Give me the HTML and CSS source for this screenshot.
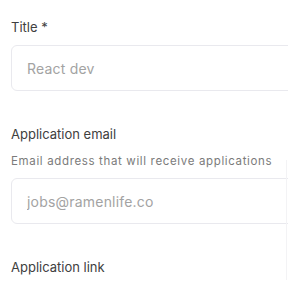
FILE: index.html
```html
<!DOCTYPE html>
<html lang="en">
<head>
  <meta charset="UTF-8" />
  <meta name="viewport" content="width=device-width, initial-scale=1.0" />
  <title>Job details</title>
  <link rel="stylesheet" href="styles.css">
</head>
<body>
  <form class="job-form">
    <div class="field">
      <label class="field-label" for="title">Title *</label>
      <input class="field-input" id="title" type="text" placeholder="React dev" />
    </div>

    <div class="field">
      <label class="field-label" for="email">Application email</label>
      <div class="field-hint">Email address that will receive applications</div>
      <input class="field-input" id="email" type="email" placeholder="jobs@ramenlife.co" />
    </div>

    <div class="field">
      <label class="field-label" for="link">Application link</label>
    </div>
  </form>
  <div class="edge-line"></div>
</body>
</html>
```

FILE: styles.css
```css
* { box-sizing: border-box; }
html, body {
  margin: 0;
  padding: 0;
  background: #fff;
  overflow: hidden;
}
body {
  font-family: Inter, 'Noto Sans', sans-serif;
  color: #3a3a3a;
  width: 288px;
  height: 288px;
  position: relative;
}
.job-form {
  padding: 19px 0 0 11px;
  display: flex;
  flex-direction: column;
  gap: 35px;
}
.field {
  display: flex;
  flex-direction: column;
}
.field-label {
  font-size: 13px;
  line-height: 16px;
  color: #404040;
}
.field-hint {
  margin-top: 12px;
  font-size: 11.5px;
  line-height: 14px;
  letter-spacing: 0.65px;
  color: #7b7b7b;
}
.field-input {
  margin-top: 10px;
  width: 320px;
  height: 46px;
  border: 1px solid #e9e9ee;
  border-radius: 6px;
  padding: 0 15px;
  font-family: inherit;
  font-size: 14px;
  letter-spacing: 0.2px;
  color: #333;
  outline: none;
}
.field-input::placeholder {
  color: #a3a3a3;
}
.edge-line {
  position: absolute;
  right: 1px;
  top: 160px;
  width: 1px;
  height: 120px;
  background: #f3f3f5;
}
```
